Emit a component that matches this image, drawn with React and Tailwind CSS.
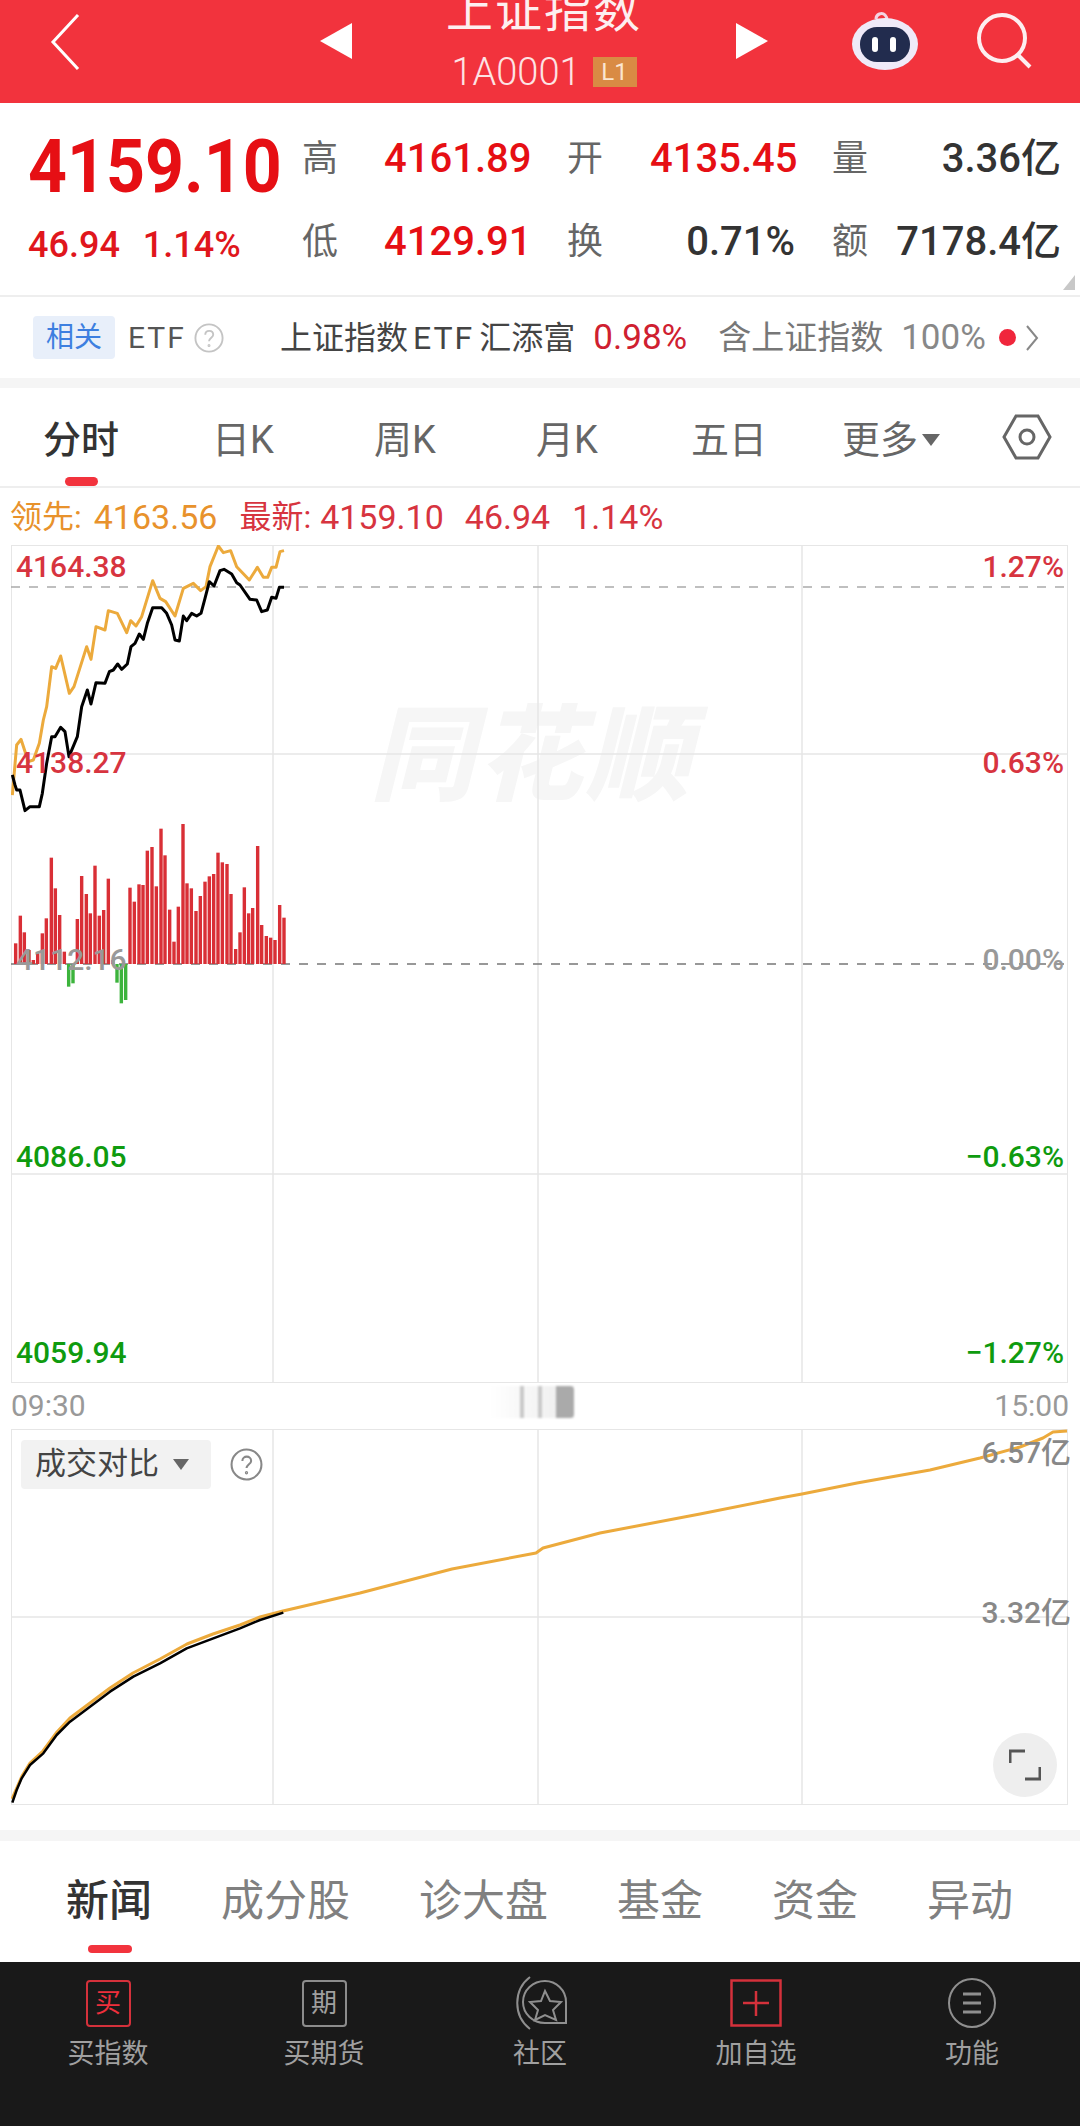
const blackLine = [[37,735],[45,765],[50,780],[60,780],[75,842],[90,830],[118,830],[127,790],[140,700],[155,620],[165,620],[182,592],[195,605],[207,680],[232,620],[245,530],[262,480],[273,522],[288,458],[315,460],[328,425],[340,420],[353,402],[365,418],[382,402],[393,350],[405,340],[418,312],[430,328],[442,280],[458,233],[485,233],[500,250],[515,285],[525,330],[538,333],[550,258],[560,272],[575,250],[590,258],[603,250],[615,205],[628,155],[642,168],[660,122],[672,118],[695,132],[710,158],[720,165],[750,208],[770,210],[785,245],[802,240],[815,202],[828,205],[838,172],[852,172]]
const orangeLine = [[37,795],[50,645],[63,628],[85,695],[100,690],[118,640],[130,570],[140,530],[155,410],[167,415],[182,378],[208,490],[222,470],[260,350],[273,388],[288,290],[315,300],[325,242],[352,250],[380,308],[392,272],[408,288],[425,260],[458,152],[480,205],[497,215],[525,258],[550,175],[580,160],[602,182],[618,170],[630,110],[655,48],[670,68],[692,62],[710,110],[748,150],[772,112],[790,142],[803,142],[815,112],[828,112],[840,65],[852,62]]
const bars = [[47,430],[61,347],[73,397],[87,450],[100,480],[113,460],[127,400],[139,355],[154,173],[166,265],[179,345],[193,455],[206,560],[219,550],[232,357],[245,228],[259,282],[271,340],[285,197],[298,347],[311,330],[325,236],[338,480],[351,548],[364,610],[377,600],[390,263],[403,305],[417,253],[429,255],[442,152],[456,141],[469,259],[483,86],[495,166],[509,329],[522,425],[535,320],[549,72],[561,250],[574,265],[588,333],[601,288],[615,245],[628,229],[641,222],[654,158],[667,187],[681,192],[693,282],[707,447],[720,397],[733,262],[746,340],[758,324],[773,138],[785,375],[799,408],[812,413],[825,420],[839,315],[852,353]]
const volumeBlack = [[37,668],[50,630],[65,595],[90,555],[130,520],[170,465],[210,425],[270,380],[330,335],[400,290],[480,250],[560,205],[640,175],[720,145],[780,120],[850,98]]
const volumeOrange = [[12,1799],[22,1776],[30,1763],[43,1751],[57,1732],[70,1718],[90,1703],[110,1688],[133,1673],[160,1659],[187,1644],[213,1634],[240,1625],[260,1617],[283,1611],[360,1593],[452,1569],[536,1553],[543,1548],[600,1533],[700,1514],[780,1498],[802,1494],[857,1483],[930,1470],[980,1458],[1020,1447],[1043,1438],[1053,1432],[1067,1431]]

const toPts = (list, ox, oy) => list.map(([x, y]) => `${x / 3 + ox},${y / 3 + oy}`).join(" ")

const Stat = ({ label, value, color, right }) => (
  <>
    <span className="text-[36px] text-[#666666]">{label}</span>
    <span className={`text-[40px] font-medium ${color} ${right}`}>{value}</span>
  </>
)

const Question = ({ size, color }) => (
  <svg width={size} height={size} viewBox="0 0 32 32" fill="none" stroke={color} strokeWidth="2">
    <circle cx="16" cy="16" r="14.5" />
    <path d="M12 12.5c0-5.5 8.5-5.5 8.5 0 0 3-4.5 3.5-4.5 7" />
    <circle cx="16" cy="24" r="0.6" />
  </svg>
)

const ChartLabel = ({ top, color, children, right, edge }) => (
  <span className={`absolute text-[30px] font-medium leading-none ${right ? (edge ? "-right-[4px]" : "right-[3px]") : "left-[4px]"} ${color}`} style={{ top }}>
    {children}
  </span>
)

const Footer = ({ icon, label }) => (
  <div className="flex w-[216px] flex-col items-center">
    <div className="flex h-[52px] items-center justify-center">{icon}</div>
    <span className="mt-[12px] text-[27px] leading-none text-[#a0a0a0]">{label}</span>
  </div>
)

const App = () => {
  return (
    <div className="flex h-[2126px] w-[1080px] flex-col overflow-hidden bg-white font-[Roboto,'Noto_Sans_CJK_SC',sans-serif]">
      {/* top bar */}
      <div className="flex h-[103px] shrink-0 items-center bg-[#f2333d] text-white">
        <svg className="ml-[50px] -mt-[20px]" width="30" height="56" viewBox="0 0 30 56" fill="none" stroke="#ffffff" strokeWidth="3">
          <path d="M28 1L3 28l25 27" />
        </svg>
        <svg className="ml-[240px] -mt-[22px]" width="32" height="36" viewBox="0 0 32 36" fill="#ffffff">
          <path d="M0 18L32 0v36z" />
        </svg>
        <div className="flex h-[103px] w-[384px] flex-col items-center">
          <span className="-mt-[16px] text-[47px] leading-[54px] tracking-[2px] text-[#fdeff0]">上证指数</span>
          <div className="mt-[17px] flex items-center gap-[12px]">
            <span className="text-[38px] font-light leading-[34px] text-[#fde3e4]">1A0001</span>
            <span className="flex h-[30px] w-[44px] items-center justify-center bg-[#d98b44] text-[24px] text-[#fbe6d0]">L1</span>
          </div>
        </div>
        <svg className="-mt-[22px]" width="32" height="36" viewBox="0 0 32 36" fill="#ffffff">
          <path d="M32 18L0 0v36z" />
        </svg>
        <svg className="ml-[83px] -mt-[22px]" width="68" height="62" viewBox="0 0 68 62">
          <path d="M25 9c0-5 6-7 9-4 2 2 2 4 2 5" fill="none" stroke="#f4d3e2" strokeWidth="3" />
          <ellipse cx="34" cy="34" rx="33" ry="26" fill="#efeaf8" />
          <rect x="9" y="17" width="50" height="35" rx="17" fill="#222c4e" />
          <rect x="21" y="27" width="6" height="15" rx="3" fill="#ffffff" />
          <rect x="39" y="27" width="6" height="15" rx="3" fill="#ffffff" />
        </svg>
        <svg className="ml-[57px] -mt-[22px]" width="56" height="56" viewBox="0 0 56 56" fill="none" stroke="#fdeef0" strokeWidth="4">
          <circle cx="26" cy="25" r="23" />
          <path d="M42 42l12 12" />
        </svg>
      </div>

      {/* quote */}
      <div className="relative flex h-[192px] shrink-0">
        <div className="flex w-[302px] flex-col pl-[28px] pt-[23px]">
          <span className="origin-center scale-y-[1.1] whitespace-nowrap text-[68px] font-bold leading-[82px] text-[#e60f14]">4159.10</span>
          <div className="mt-[15px] flex gap-[23px] text-[36px] font-medium leading-[44px] text-[#e0161c]">
            <span>46.94</span>
            <span>1.14%</span>
          </div>
        </div>
        <div className="grid auto-rows-[83px] grid-cols-[82px_183px_83px_182px_50px_179px] items-center pt-[14px]">
          <Stat label="高" value="4161.89" color="text-[#e60f14]" />
          <Stat label="开" value="4135.45" color="text-[#e60f14]" right="pr-[37px] text-right" />
          <Stat label="量" value="3.36亿" color="text-[#333333]" right="text-right" />
          <Stat label="低" value="4129.91" color="text-[#e60f14]" />
          <Stat label="换" value="0.71%" color="text-[#333333]" right="pr-[37px] text-right" />
          <Stat label="额" value="7178.4亿" color="text-[#333333]" right="text-right" />
        </div>
        <div className="absolute bottom-[5px] right-[5px] h-0 w-0 border-b-[15px] border-l-[12px] border-b-[#c8c8c8] border-l-transparent" />
      </div>

      {/* related etf */}
      <div className="flex h-[83px] shrink-0 items-center border-t-2 border-[#eeeeee] text-[32px] leading-none">
        <span className="ml-[33px] flex h-[43px] w-[82px] items-center justify-center rounded-[4px] bg-[#e8effa] text-[28px] text-[#3d7fe0]">相关</span>
        <span className="ml-[13px] w-[66px] text-[30px] tracking-[2px] text-[#555555]">ETF</span>
        <Question size={30} color="#c4c4c4" />
        <span className="ml-[56px] flex items-center gap-[5px] text-[#444444]">
          上证指数<span className="tracking-[2px]">ETF</span>汇添富
        </span>
        <span className="ml-[18px] text-[35px] text-[#cf2030]">0.98%</span>
        <span className="ml-[31px] text-[33px] text-[#777777]">含上证指数</span>
        <span className="ml-[18px] text-[35px] text-[#888888]">100%</span>
        <span className="ml-[13px] h-[17px] w-[17px] rounded-full bg-[#f0263c]" />
        <svg className="ml-[10px]" width="13" height="26" viewBox="0 0 13 26" fill="none" stroke="#888888" strokeWidth="2">
          <path d="M1 1l10 12L1 25" />
        </svg>
      </div>
      <div className="h-[10px] shrink-0 bg-[#f5f5f5]" />

      {/* period tabs */}
      <div className="relative flex h-[100px] shrink-0 items-center border-b-2 border-[#eeeeee] pt-[6px] text-[38px] text-[#666666]">
        <span className="w-[162px] text-center font-medium text-[#333333]">分时</span>
        <span className="w-[162px] text-center">日K</span>
        <span className="w-[162px] text-center">周K</span>
        <span className="w-[162px] text-center">月K</span>
        <span className="w-[162px] text-center">五日</span>
        <span className="flex w-[162px] items-center justify-center gap-[4px]">
          更多
          <span className="h-0 w-0 border-x-[9px] border-t-[12px] border-x-transparent border-t-[#666666]" />
        </span>
        <svg className="ml-[30px] -mt-[6px]" width="50" height="46" viewBox="0 0 50 46" fill="none" stroke="#666666" strokeWidth="3">
          <path d="M2 23L14 2h22l12 21-12 21H14z" />
          <circle cx="25" cy="23" r="7" />
        </svg>
        <div className="absolute bottom-0 left-[65px] h-[9px] w-[33px] rounded-full bg-[#f2333d]" />
      </div>

      {/* legend */}
      <div className="flex h-[57px] shrink-0 items-center pl-[10px] text-[34px] leading-none">
        <span className="flex items-center gap-[12px] text-[#e8922c]">
          <span className="text-[32px]">领先:</span>4163.56
        </span>
        <span className="ml-[22px] flex items-center gap-[9px] text-[#d7343f]">
          <span className="text-[32px]">最新:</span>4159.10
        </span>
        <span className="ml-[21px] text-[#d7343f]">46.94</span>
        <span className="ml-[22px] text-[#d7343f]">1.14%</span>
      </div>

      {/* main chart */}
      <div className="relative ml-[11px] h-[838px] w-[1057px] shrink-0 border border-[#e6e6e6]">
        <span className="absolute left-[358px] top-[159px] text-[104px] font-black italic leading-none tracking-[4px] text-[#f6f6f6]">同花顺</span>
        <svg className="absolute -left-px -top-px" width="1057" height="838" viewBox="11 545 1057 838" fill="none">
          <path d="M273 545V1383M538 545V1383M802 545V1383M11 754H1068M11 1174H1068" stroke="#e6e6e6" strokeWidth="1.5" />
          <path d="M11 587H1068" stroke="#aaaaaa" strokeWidth="1.5" strokeDasharray="9 9" />
          <path d="M11 964H1068" stroke="#777777" strokeWidth="1.5" strokeDasharray="9 9" />
          <polyline points={toPts(orangeLine, 0, 530)} stroke="#ecaa3c" strokeWidth="3" strokeLinejoin="round" />
          <polyline points={toPts(blackLine, 0, 530)} stroke="#000000" strokeWidth="3" strokeLinejoin="round" />
          {bars.map(([x, y]) => (
            <rect
              key={x}
              x={x / 3 - 1.7}
              y={y < 492 ? 800 + y / 3 : 964}
              width="3.4"
              height={Math.abs(y - 492) / 3}
              fill={y < 492 ? "#d92f36" : "#3cb43c"}
            />
          ))}
        </svg>
        <ChartLabel top={6} color="text-[#d7343f]">4164.38</ChartLabel>
        <ChartLabel top={202} color="text-[#d7343f]">4138.27</ChartLabel>
        <ChartLabel top={399} color="text-[#999999]">4112.16</ChartLabel>
        <ChartLabel top={596} color="text-[#0f9b0f]">4086.05</ChartLabel>
        <ChartLabel top={792} color="text-[#0f9b0f]">4059.94</ChartLabel>
        <ChartLabel right top={6} color="text-[#d7343f]">1.27%</ChartLabel>
        <ChartLabel right top={202} color="text-[#d7343f]">0.63%</ChartLabel>
        <ChartLabel right top={399} color="text-[#999999]">0.00%</ChartLabel>
        <ChartLabel right top={596} color="text-[#0f9b0f]">−0.63%</ChartLabel>
        <ChartLabel right top={792} color="text-[#0f9b0f]">−1.27%</ChartLabel>
      </div>

      {/* time axis */}
      <div className="relative flex h-[46px] shrink-0 items-center justify-between px-[11px] text-[30px] leading-none text-[#999999]">
        <span>09:30</span>
        <span>15:00</span>
        <div className="absolute left-[490px] top-[3px] flex h-[32px] w-[84px] items-stretch justify-end gap-[14px] bg-gradient-to-r from-[#ffffff] to-[#ececec] blur-[1px]">
          <span className="w-[4px] bg-[#c8c8c8]" />
          <span className="w-[4px] bg-[#c8c8c8]" />
          <span className="w-[18px] rounded-r-[4px] bg-[#aaaaaa]" />
        </div>
      </div>

      {/* volume compare chart */}
      <div className="relative ml-[11px] h-[376px] w-[1057px] shrink-0 border border-[#e6e6e6]">
        <svg className="absolute -left-px -top-px" width="1057" height="376" viewBox="11 1429 1057 376" fill="none">
          <path d="M273 1429V1805M538 1429V1805M802 1429V1805M11 1617H1068" stroke="#e6e6e6" strokeWidth="1.5" />
          <polyline points={volumeOrange.map(([x, y]) => `${x},${y}`).join(" ")} stroke="#ecaa3c" strokeWidth="3" strokeLinejoin="round" />
          <polyline points={toPts(volumeBlack, 0, 1580)} stroke="#000000" strokeWidth="2.5" strokeLinejoin="round" />
        </svg>
        <div className="absolute left-[9px] top-[10px] flex items-center gap-[16px]">
          <div className="flex h-[49px] w-[190px] items-center gap-[14px] rounded-[4px] bg-[#f2f2f2] pl-[14px] text-[31px] text-[#444444]">
            成交对比
            <span className="h-0 w-0 border-x-[8px] border-t-[11px] border-x-transparent border-t-[#666666]" />
          </div>
          <span className="ml-[3px]">
            <Question size={33} color="#888888" />
          </span>
        </div>
        <ChartLabel right edge top={8} color="text-[#888888]">6.57亿</ChartLabel>
        <ChartLabel right edge top={168} color="text-[#888888]">3.32亿</ChartLabel>
        <div className="absolute left-[981px] top-[303px] flex h-[64px] w-[64px] items-center justify-center rounded-full bg-[#eeeeee]">
          <svg width="32" height="32" viewBox="0 0 32 32" fill="none" stroke="#555555" strokeWidth="3">
            <path d="M1 14V2h15M31 18v12H16" />
          </svg>
        </div>
      </div>

      <div className="h-[25px] shrink-0" />
      <div className="h-[11px] shrink-0 bg-[#f5f5f5]" />

      {/* info tabs */}
      <div className="relative flex h-[121px] shrink-0 items-center gap-[69px] pl-[66px] text-[43px] leading-none text-[#808080]">
        <span className="font-medium text-[#333333]">新闻</span>
        <span>成分股</span>
        <span>诊大盘</span>
        <span>基金</span>
        <span>资金</span>
        <span>异动</span>
        <div className="absolute bottom-[9px] left-[88px] h-[8px] w-[44px] rounded-full bg-[#f2333d]" />
      </div>

      {/* bottom nav */}
      <div className="flex grow items-start bg-[#191919] pt-[15px]">
        <Footer
          label="买指数"
          icon={
            <span className="flex h-[47px] w-[45px] items-center justify-center rounded-[4px] border-2 border-[#d4313b] text-[26px] leading-none text-[#ee2f3c]">买</span>
          }
        />
        <Footer
          label="买期货"
          icon={
            <span className="flex h-[47px] w-[45px] items-center justify-center rounded-[4px] border-2 border-[#8c8c8c] text-[26px] leading-none text-[#a0a0a0]">期</span>
          }
        />
        <Footer
          label="社区"
          icon={
            <svg width="56" height="54" viewBox="0 0 56 54" fill="none" stroke="#8f8f8f" strokeWidth="2">
              <path d="M18 1C1 14 1 40 18 53" />
              <path d="M54 47V26C54 14 44 5 33 5 21 5 11 14 11 26s10 21 22 21z" />
              <path d="M33 15l5 10 11 1-8 8 3 10-11-5-10 5 3-10-8-8 11-1z" />
            </svg>
          }
        />
        <Footer
          label="加自选"
          icon={
            <svg width="52" height="48" viewBox="0 0 52 48" fill="none" stroke="#d4313b" strokeWidth="2.5">
              <rect x="1.5" y="1.5" width="49" height="45" />
              <path d="M26 12v25M13 24h26" />
            </svg>
          }
        />
        <Footer
          label="功能"
          icon={
            <svg width="48" height="50" viewBox="0 0 48 50" fill="none" stroke="#8f8f8f" strokeWidth="2">
              <ellipse cx="24" cy="25" rx="23" ry="24" />
              <path d="M15 16h18M15 25h18M15 34h18" strokeWidth="3" />
            </svg>
          }
        />
      </div>
    </div>
  )
}

export default App
